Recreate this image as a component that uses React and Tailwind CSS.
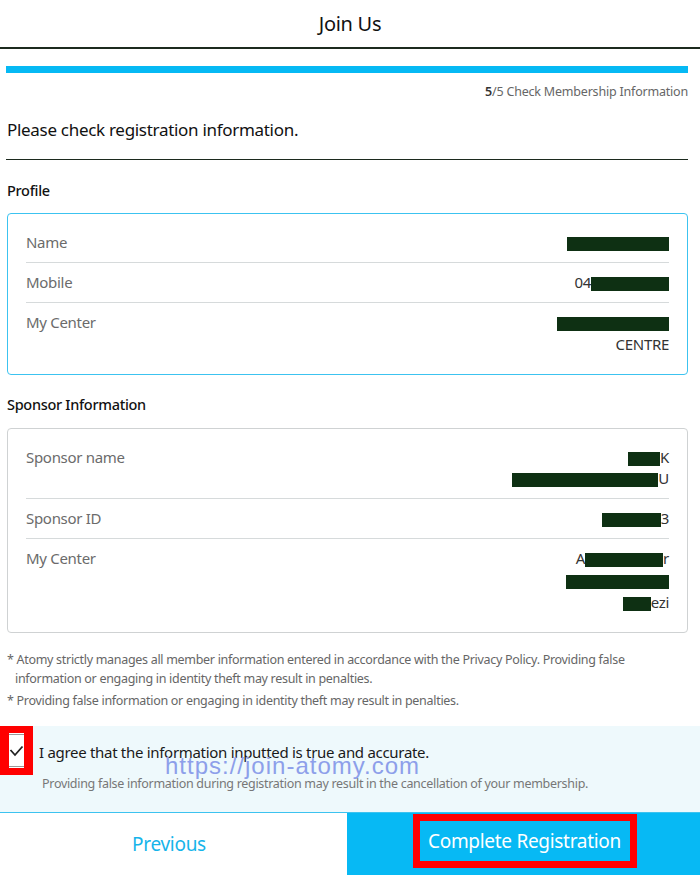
import React from 'react';

const font = { fontFamily: '"Noto Sans", "Open Sans", sans-serif' };

// redaction bar
function Bar({ w }) {
    return <span className="inline-block h-[14px] bg-[#0e3013] align-middle" style={{ width: w }} />;
}

function Row({ label, children, last }) {
    return (
        <div className={`flex justify-between py-[9px] ${last ? '' : 'border-b border-[#d6dadb]'}`}>
            <span className="text-[15px] leading-[21px] text-[#6b6b6b]">{label}</span>
            <div className="flex flex-col items-end text-[15px] leading-[21px] text-[#333]">{children}</div>
        </div>
    );
}

export default function App() {
    return (
        <div className="w-[700px] h-[875px] bg-white flex flex-col overflow-hidden" style={font}>
            {/* Header */}
            <header className="h-[49px] flex items-center justify-center border-b-2 border-[#1c2a1e]">
                <h1 className="text-[20px] text-[#111] tracking-[-0.3px]">Join Us</h1>
            </header>

            <div className="pl-[6px] pr-[12px] pt-[17px]">
                <div className="h-[7px] bg-[#06b9f4]" />
                <p className="text-right text-[12.5px] text-[#666] mt-[10px] tracking-[-0.2px]">
                    <b className="font-semibold text-[#333]">5</b>/5 Check Membership Information
                </p>

                <h2 className="text-[17px] text-[#111] mt-[15px] pb-[17px] border-b border-[#1c2a1e] tracking-[-0.3px] pl-[1px]">
                    Please check registration information.
                </h2>

                <h3 className="text-[14.5px] font-medium text-[#111] mt-[20px] pl-[1px] tracking-[-0.3px]">Profile</h3>
                <div className="mt-[11px] ml-[1px] border border-[#3cc3f0] rounded-[4px] px-[18px] pt-[9px] pb-[10px] tracking-[-0.3px]">
                    <Row label="Name"><span><Bar w={102} /></span></Row>
                    <Row label="Mobile"><span>04<Bar w={78} /></span></Row>
                    <Row label="My Center" last>
                        <span><Bar w={112} /></span>
                        <span className="mt-[1px]">CENTRE</span>
                    </Row>
                </div>

                <h3 className="text-[14.5px] font-medium text-[#111] mt-[19px] pl-[1px] tracking-[-0.3px]">Sponsor Information</h3>
                <div className="mt-[12px] ml-[1px] border border-[#cfd2d3] rounded-[4px] px-[18px] pt-[9px] pb-[10px] tracking-[-0.3px]">
                    <Row label="Sponsor name">
                        <span><Bar w={32} />K</span>
                        <span><Bar w={146} />U</span>
                    </Row>
                    <Row label="Sponsor ID"><span><Bar w={59} />3</span></Row>
                    <Row label="My Center" last>
                        <span>A<Bar w={78} />r</span>
                        <span className="mt-[1px]"><Bar w={103} /></span>
                        <span className="mt-[1px]"><Bar w={28} />ezi</span>
                    </Row>
                </div>

                <div className="mt-[17px] text-[12.5px] leading-[19px] text-[#666] tracking-[-0.3px] pl-[1px]">
                    <p className="pl-[8px] -indent-[8px]">* Atomy strictly manages all member information entered in accordance with the Privacy Policy. Providing false information or engaging in identity theft may result in penalties.</p>
                    <p className="mt-[3px]">* Providing false information or engaging in identity theft may result in penalties.</p>
                </div>
            </div>

            {/* Agreement */}
            <div className="relative mt-[16px] h-[87px] bg-[#eef9fc] border-b border-[#3cc3f0]">
                <div className="flex items-start">
                    <div className="w-[33px] h-[49px] bg-[#ff0000] flex items-center justify-center">
                        <div className="w-[15px] h-[35px] bg-white flex flex-col justify-between py-[1px]">
                            <div className="h-px bg-[#999]" />
                            <svg viewBox="0 0 15 15" className="w-[15px] h-[15px]">
                                <path d="M1.5 7 L6 12 L13.5 3.5" fill="none" stroke="#222" strokeWidth="1.8" />
                            </svg>
                            <div className="h-px bg-[#999]" />
                        </div>
                    </div>
                    <p className="ml-[6px] mt-[15px] text-[15px] text-[#1a1a1a] tracking-[-0.3px]">
                        I agree that the information inputted is true and accurate.
                    </p>
                </div>
                <p className="ml-[42px] mt-[0px] text-[12.5px] text-[#777] tracking-[-0.3px]">
                    Providing false information during registration may result in the cancellation of your membership.
                </p>
                <span
                    className="absolute left-[165px] top-[26px] text-[24px] leading-[28px] tracking-[1px] text-[#8d9fea]"
                    style={{ fontFamily: '"Liberation Sans", Arial, sans-serif' }}
                >
                    https://join-atomy.com
                </span>
            </div>

            {/* Buttons */}
            <div className="flex flex-1">
                <button className="w-[347px] flex items-center justify-center pr-[9px] text-[19px] text-[#16b4ea] tracking-[-0.3px]">
                    Previous
                </button>
                <div className="flex-1 bg-[#07b9f4] flex items-start justify-center">
                    <div className="ml-[2px] mt-[1px] w-[224px] h-[54px] bg-[#ff0000] p-[7px]">
                        <div className="w-full h-full bg-[#07b9f4] flex items-center justify-center text-[19px] text-white tracking-[-0.3px]">
                            Complete Registration
                        </div>
                    </div>
                </div>
            </div>
        </div>
    );
}
